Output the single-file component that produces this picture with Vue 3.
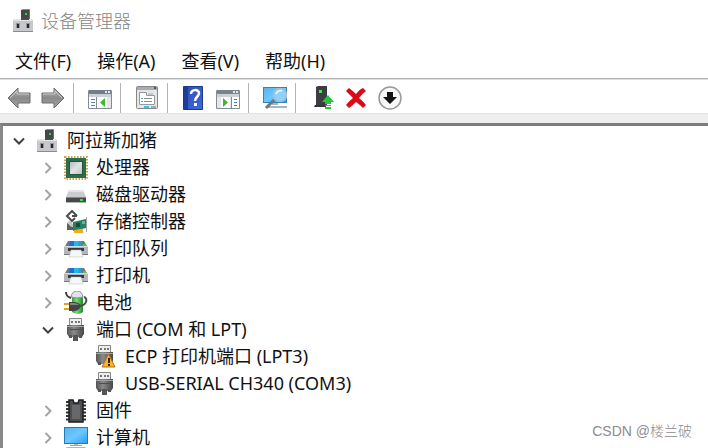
<template>
  <div class="device-manager">
    <svg class="icon-defs" width="0" height="0" aria-hidden="true">
      <defs>
        <linearGradient id="g-arrow" x1="0" y1="0" x2="0" y2="1">
          <stop offset="0" stop-color="#b5b5b5" />
          <stop offset="0.5" stop-color="#8a8a8a" />
          <stop offset="1" stop-color="#a2a2a2" />
        </linearGradient>
        <linearGradient id="g-screen" x1="0" y1="0" x2="1" y2="1">
          <stop offset="0" stop-color="#58b4ee" />
          <stop offset="0.5" stop-color="#6cc8ff" />
          <stop offset="1" stop-color="#2ba0f6" />
        </linearGradient>
        <linearGradient id="g-chip" x1="0" y1="0" x2="1" y2="1">
          <stop offset="0" stop-color="#b4b6b6" />
          <stop offset="0.5" stop-color="#e2e3e3" />
          <stop offset="1" stop-color="#bcbebe" />
        </linearGradient>
        <linearGradient id="g-plug" x1="0" y1="0" x2="1" y2="0">
          <stop offset="0" stop-color="#555" />
          <stop offset="0.4" stop-color="#8a8a8a" />
          <stop offset="1" stop-color="#484848" />
        </linearGradient>
        <linearGradient id="g-help" x1="0" y1="0" x2="1" y2="1">
          <stop offset="0" stop-color="#2c50b4" />
          <stop offset="1" stop-color="#4468d4" />
        </linearGradient>
        <linearGradient id="g-green" x1="0" y1="0" x2="1" y2="0">
          <stop offset="0" stop-color="#2f9d38" />
          <stop offset="0.4" stop-color="#7bdc72" />
          <stop offset="1" stop-color="#25872f" />
        </linearGradient>
      </defs>

      <symbol id="computer" viewBox="0 0 24 24">
        <path d="M10 1h9v10h-9z" fill="#45474b" />
        <path d="M10 1l2-1h7l-1 1z" fill="#898b8f" />
        <path d="M18 1l1-1v11h-1z" fill="#6f7174" />
        <path d="M14 4h2v2h-2z" fill="#24e03c" />
        <path d="M3 10h18l1 2v11H2V12z" fill="#c7c8cc" />
        <path d="M3 10h18v2H3z" fill="#e5e5e8" />
        <path d="M10 9h8v2h-8z" fill="#4b4d50" />
        <path d="M2 22h20v1H2z" fill="#8b8b90" />
        <path d="M5 14h4v5H5zM15 14h4v5h-4z" fill="#94969b" />
        <path d="M6 15h2v4H6zM16 15h2v4h-2z" fill="#26282b" />
      </symbol>

      <symbol id="cpu" viewBox="0 0 24 24">
        <rect x="1" y="1" width="22" height="22" fill="none" stroke="#c9a44c" stroke-width="2" stroke-dasharray="1.5 1.5" />
        <rect x="2" y="2" width="20" height="20" fill="#2f6a4c" />
        <rect x="5.500" y="5.500" width="13" height="13" fill="url(#g-chip)" stroke="#1f5a3c" />
      </symbol>

      <symbol id="disk" viewBox="0 0 24 24">
        <path d="M5 7h14l3 7H2z" fill="#cbccd0" />
        <path d="M5 7h14l1 2H4z" fill="#e4e4e7" />
        <path d="M2 14h20v5H2z" fill="#47494d" />
        <path d="M2 14h20v1H2z" fill="#85878b" />
        <path d="M2 19h20v1H2z" fill="#b2b3b6" />
        <path d="M16 16h3v2h-3z" fill="#2ce83c" />
      </symbol>

      <symbol id="storage" viewBox="0 0 24 24">
        <path d="M3 13l6 4 2 3H3z" fill="#5c5e60" />
        <path d="M3 12l3-1 4 4-3 2z" fill="#c3c5c7" />
        <path d="M13 6L8 1 3 6l5 5 3-3M13 6H8" fill="none" stroke="#4a4c4e" stroke-width="2" />
        <path d="M9 12l13-3v9l-13 3z" fill="#278061" />
        <path d="M12 13h4v4h-4z" fill="#174d38" />
        <path d="M18 11h3v3h-3z" fill="#5bb892" />
        <path d="M22 7h1v15h-1z" fill="#a3a6a8" />
        <path d="M10 20l9-1v4h-9z" fill="#f0ac20" />
      </symbol>

      <symbol id="printer" viewBox="0 0 24 24">
        <path d="M4 4h16l3 5H1z" fill="#74777b" />
        <path d="M6 4h5v5H5z" fill="#1773d5" />
        <path d="M10 4h5v5h-5z" fill="#27b6e7" />
        <path d="M15 4h2l1 5h-4z" fill="#2a9dd0" />
        <path d="M19 7h3v2h-3z" fill="#35d542" />
        <path d="M0 9h24v9H0z" fill="#b5b7bb" />
        <path d="M0 9h24v1H0z" fill="#d9dadd" />
        <path d="M4 11h16v3H4z" fill="#34373b" />
        <path d="M0 17h6v1H0zM18 17h6v1h-6z" fill="#75777b" />
        <path d="M7 13h10l2 7H5z" fill="#f6f7f8" stroke="#b6b8bb" stroke-width="0.500" />
      </symbol>

      <symbol id="battery" viewBox="0 0 24 24">
        <path d="M8 5h11v16q-5 4-11 0z" fill="url(#g-green)" />
        <path d="M7 6q1-6 6-6t6 6q-6 2-12 0z" fill="#dfe1ef" stroke="#8c90a0" />
        <path d="M2 1c0 4 2 5 5 6" fill="none" stroke="#3b3d3e" stroke-width="2" />
        <path d="M20 6c4 1 3 8-4 9" fill="none" stroke="#4b4d4e" stroke-width="2" />
        <path d="M0 13h6M0 18h6" stroke="#dba424" stroke-width="2" />
        <path d="M5 11h5q5 0 7 4-2 5-7 5H5z" fill="#424446" />
        <path d="M6 12h4q3 0 5 2H6z" fill="#818486" />
      </symbol>

      <symbol id="port" viewBox="0 0 24 24">
        <path d="M5.500.500h12V9h-12z" fill="#eee" stroke="#888" />
        <path d="M7 3h2v2H7zM11 3h2v2h-2zM14 3h2v2h-2z" fill="#777" />
        <path d="M3 7h17v9l-2 3H5l-2-3z" fill="url(#g-plug)" />
        <path d="M3 8h17v1H3z" fill="#a5a5a5" />
        <path d="M6 11h11v1H6z" fill="#4e4e4e" />
        <path d="M5 17h3v3H5zM15 17h3v3h-3zM9 17h5v6H9z" fill="#555" />
      </symbol>

      <symbol id="port-warning" viewBox="0 0 24 24">
        <path d="M5.500.500h12V9h-12z" fill="#eee" stroke="#888" />
        <path d="M7 3h2v2H7zM11 3h2v2h-2zM14 3h2v2h-2z" fill="#777" />
        <path d="M3 7h17v9l-2 3H5l-2-3z" fill="url(#g-plug)" />
        <path d="M3 8h17v1H3z" fill="#a5a5a5" />
        <path d="M5 17h3v3H5z" fill="#555" />
        <path d="M15.500 9L22 22H9z" fill="#f4b42c" stroke="#b96f12" stroke-linejoin="round" />
        <path d="M15 13h2v5h-2zM15 19h2v2h-2z" fill="#3a2608" />
      </symbol>

      <symbol id="firmware" viewBox="0 0 24 24">
        <path d="M4 2v20M20 2v20" stroke="#333" stroke-width="4" stroke-dasharray="2 1.5" />
        <path d="M5 1h4l1 3h4l1-3h4v22H5z" fill="#4c4e51" stroke="#1c1d1e" stroke-width="1.500" />
        <path d="M8 6h8v14H8z" fill="#66686b" />
      </symbol>

      <symbol id="monitor" viewBox="0 0 24 24">
        <path d="M0 1h24v17H0z" fill="#2a76b2" />
        <path d="M1 2h22v15H1z" fill="url(#g-screen)" />
        <path d="M10 18h4v1h-4z" fill="#aeb9c3" />
        <path d="M6 19h12v1H6z" fill="#94a5b4" />
        <path d="M3 21h18l3 2H0z" fill="#a7b8c7" />
      </symbol>

      <symbol id="back" viewBox="0 0 24 24">
        <path d="M1 12L11 2v5h12v10H11v5z" fill="url(#g-arrow)" stroke="#6d6d6d" stroke-linejoin="round" />
        <path d="M3 12l7-7v3h12" fill="none" stroke="#c9c9c9" />
      </symbol>

      <symbol id="forward" viewBox="0 0 24 24">
        <path d="M23 12L13 2v5H1v10h12v5z" fill="url(#g-arrow)" stroke="#6d6d6d" stroke-linejoin="round" />
        <path d="M2 8h12V5l7 7" fill="none" stroke="#c9c9c9" />
      </symbol>

      <symbol id="console-tree" viewBox="0 0 24 24">
        <path d="M.500 4.500h23v18H.500z" fill="#fff" stroke="#858b94" />
        <path d="M1 4h22v4H1z" fill="#747d8b" />
        <path d="M17 5h2v2h-2zM20 5h2v2h-2z" fill="#e3e8ef" />
        <path d="M1 8h22v3H1z" fill="#ccd1d7" />
        <path d="M8.500 11v12" stroke="#858b94" />
        <path d="M3 13.500h4M3 16.500h4M3 19.500h4" stroke="#4a86c5" />
        <path d="M17 12v9l-5-4.500z" fill="#38bd30" />
        <path d="M19 11h4v11h-4z" fill="#e4e6e9" />
      </symbol>

      <symbol id="properties" viewBox="0 0 24 24">
        <rect x="1.500" y=".500" width="21" height="22" rx="1" fill="#e5e6e8" stroke="#85878b" />
        <path d="M2 1h20v3H2z" fill="#a8abb0" />
        <path d="M19 1h2v2h-2z" fill="#505257" />
        <path d="M4.500 6.500h7v3h8v9h-15z" fill="#fff" stroke="#9699a2" />
        <path d="M13 7h5v2h-5z" fill="#c4c8ce" />
        <path d="M6 12h2v1H6zM6 15h2v1H6z" fill="#35bce7" />
        <path d="M9 12.500h8M9 15.500h8" stroke="#888d96" />
        <path d="M9 20h5v2H9z" fill="#2cc8ed" />
        <path d="M16 20h5v2h-5z" fill="#a4abb1" />
      </symbol>

      <symbol id="help" viewBox="0 0 24 24">
        <path d="M1.500.500h19v23h-19z" fill="url(#g-help)" stroke="#1c388c" />
        <path d="M2 1h4v22H2z" fill="#1e3d9a" />
        <path d="M9 8c0-5 8-5 8-1 0 4-4 4-4 8" fill="none" stroke="#fff" stroke-width="2.500" />
        <path d="M12 17h3v3h-3z" fill="#fff" />
      </symbol>

      <symbol id="action-pane" viewBox="0 0 24 24">
        <path d="M.500 4.500h23v18H.500z" fill="#e4e6e9" stroke="#858b94" />
        <path d="M1 4h22v4H1z" fill="#7c838e" />
        <path d="M17 5h2v2h-2zM20 5h2v2h-2z" fill="#e3e8ef" />
        <path d="M1 8h22v3H1z" fill="#ccd1d7" />
        <path d="M5 11h9v11H5z" fill="#fff" />
        <path d="M15.500 11v12" stroke="#858b94" />
        <path d="M16 11h7v11h-7z" fill="#fff" />
        <path d="M18 13.500h3M18 16.500h3M18 19.500h3" stroke="#3976cc" />
        <path d="M7 12v9l5-4.500z" fill="#45b332" />
      </symbol>

      <symbol id="scan" viewBox="0 0 24 24">
        <path d="M0 1h24v16H0z" fill="#3781b5" />
        <path d="M1 2h22v14H1z" fill="url(#g-screen)" />
        <path d="M9 17h6v2H9zM5 20h19v2H3z" fill="#a4b5c3" />
        <path d="M11 14l-8 8" stroke="#6c7780" stroke-width="3" />
        <circle cx="17" cy="9" r="6.500" fill="#8dd2fa" stroke="#b0bdc8" stroke-width="1.500" />
        <path d="M13 8c1-3 4-4 6-3" fill="none" stroke="#e1f5ff" stroke-width="1.500" />
      </symbol>

      <symbol id="update-driver" viewBox="0 0 24 24">
        <path d="M6 1l2-1h9v19H6z" fill="#3b3e42" />
        <path d="M5 19h11v2H4z" fill="#34373a" />
        <path d="M9 4h3v3H9z" fill="#36ee45" />
        <path d="M18 9l6 7h-3v2h-6v-2h-3z" fill="#25c63a" />
        <path d="M15 19h6v1h-6zM15 21h6v2h-6z" fill="#25c63a" />
      </symbol>

      <symbol id="uninstall" viewBox="0 0 24 24">
        <path d="M2 5l3-3q4 3 7 6 4-5 7-6l3 3q-4 3-7 7 4 3 7 7l-3 3q-4-4-7-6-4 4-7 6l-3-3q3-4 7-7-4-4-7-7z" fill="#de0916" />
      </symbol>

      <symbol id="disable" viewBox="0 0 24 24">
        <circle cx="12" cy="12" r="11" fill="#f8f8f8" stroke="#97999c" stroke-width="1.500" />
        <path d="M9 6h6v5h4l-7 7-7-7h4z" fill="#151515" />
      </symbol>
    </svg>

    <header class="title-bar">
      <svg class="icon"><use href="#computer" /></svg>
      <h1 class="title">设备管理器</h1>
    </header>

    <nav class="menu-bar">
      <button v-for="item in menus" :key="item" class="menu-item" type="button">{{ item }}</button>
    </nav>

    <div class="toolbar" role="toolbar">
      <div v-for="(group, index) in toolGroups" :key="index" class="tool-group">
        <button
          v-for="tool in group"
          :key="tool.icon"
          class="tool-btn"
          type="button"
          :aria-label="tool.label"
        >
          <svg class="icon"><use :href="'#' + tool.icon" /></svg>
        </button>
      </div>
    </div>

    <main class="tree-panel">
      <ul class="tree" role="tree">
        <li
          v-for="node in visibleNodes"
          :key="node.id"
          class="tree-row"
          :class="'level-' + node.level"
          role="treeitem"
        >
          <button
            v-if="node.children"
            class="toggle"
            :class="{ open: node.open }"
            type="button"
            :aria-label="node.name"
            :aria-expanded="node.open"
            @click="toggleNode(node.id)"
          >
            <svg class="chevron" viewBox="0 0 12 12">
              <path :d="node.open ? 'M1 3.500L6 8.500 11 3.500' : 'M3.500 1L8.500 6 3.500 11'" />
            </svg>
          </button>
          <span v-else class="toggle"></span>
          <svg class="icon"><use :href="'#' + node.icon" /></svg>
          <span class="node-name">{{ node.name }}</span>
        </li>
      </ul>
    </main>

    <div class="watermark">CSDN @楼兰破</div>
  </div>
</template>

<script setup>
import { ref, computed } from 'vue'

const menus = ['文件(F)', '操作(A)', '查看(V)', '帮助(H)']

const toolGroups = [
  [
    { icon: 'back', label: '后退' },
    { icon: 'forward', label: '前进' }
  ],
  [{ icon: 'console-tree', label: '显示/隐藏控制台树' }],
  [{ icon: 'properties', label: '属性' }],
  [
    { icon: 'help', label: '帮助' },
    { icon: 'action-pane', label: '显示/隐藏操作窗格' }
  ],
  [{ icon: 'scan', label: '扫描检测硬件改动' }],
  [
    { icon: 'update-driver', label: '更新驱动程序' },
    { icon: 'uninstall', label: '卸载设备' },
    { icon: 'disable', label: '禁用设备' }
  ]
]

const nodes = ref([
  { id: 1, level: 0, icon: 'computer', name: '阿拉斯加猪', children: true, open: true },
  { id: 2, parent: 1, level: 1, icon: 'cpu', name: '处理器', children: true, open: false },
  { id: 3, parent: 1, level: 1, icon: 'disk', name: '磁盘驱动器', children: true, open: false },
  { id: 4, parent: 1, level: 1, icon: 'storage', name: '存储控制器', children: true, open: false },
  { id: 5, parent: 1, level: 1, icon: 'printer', name: '打印队列', children: true, open: false },
  { id: 6, parent: 1, level: 1, icon: 'printer', name: '打印机', children: true, open: false },
  { id: 7, parent: 1, level: 1, icon: 'battery', name: '电池', children: true, open: false },
  { id: 8, parent: 1, level: 1, icon: 'port', name: '端口 (COM 和 LPT)', children: true, open: true },
  { id: 9, parent: 8, level: 2, icon: 'port-warning', name: 'ECP 打印机端口 (LPT3)' },
  { id: 10, parent: 8, level: 2, icon: 'port', name: 'USB-SERIAL CH340 (COM3)' },
  { id: 11, parent: 1, level: 1, icon: 'firmware', name: '固件', children: true, open: false },
  { id: 12, parent: 1, level: 1, icon: 'monitor', name: '计算机', children: true, open: false }
])

// 所有上级都展开时才显示
const visibleNodes = computed(() => nodes.value.filter(isVisible))

function findNode(id) {
  return nodes.value.find((n) => n.id === id)
}

function isVisible(node) {
  if (!node.parent) return true
  const parent = findNode(node.parent)
  return parent.open && isVisible(parent)
}

function toggleNode(id) {
  const node = findNode(id)
  node.open = !node.open
}
</script>

<style>
body {
  margin: 0;
  background: #fff;
}
</style>

<style scoped>
.device-manager {
  position: relative;
  display: flex;
  flex-direction: column;
  height: 100vh;
  overflow: hidden;
  background: #fff;
  color: #111;
  font-family: "Noto Sans", "Noto Sans CJK SC", sans-serif;
  font-size: 18px;
  line-height: 27px;
}

.icon-defs {
  position: absolute;
}

button {
  padding: 0;
  border: none;
  background: transparent;
  color: inherit;
  font: inherit;
}

.icon {
  display: block;
  flex: none;
  width: 24px;
  height: 24px;
}

.title-bar {
  display: flex;
  flex: none;
  align-items: center;
  gap: 6px;
  height: 42px;
  padding: 0 11px 2px;
}

.title {
  margin: 0;
  font-size: 18px;
  font-weight: 300;
  color: #858585;
}

.menu-bar {
  display: flex;
  flex: none;
  align-items: center;
  gap: 26px;
  height: 34px;
  padding: 0 15px;
  border-bottom: 1px solid #b2b5b8;
}

.toolbar {
  display: flex;
  flex: none;
  align-items: center;
  padding: 3px 7px 0;
  border-top: 1px solid #dbe0e5;
  border-bottom: 1px solid #e3e3e3;
}

.tool-group {
  display: flex;
  align-items: center;
  gap: 10px;
  height: 30px;
  margin-right: 14px;
  padding-right: 8px;
  border-right: 1px solid #b4b4b4;
}

.tool-group:last-child {
  border-right: none;
}

.tree-panel {
  flex: 1;
  min-height: 0;
  padding-top: 9px;
  background: #eee;
}

.tree {
  height: 100%;
  margin: 0;
  padding: 1px 0 0 2px;
  border-top: 3px solid #7d7d7d;
  border-left: 3px solid #898989;
  background: #fff;
  list-style: none;
}

.tree-row {
  display: flex;
  align-items: center;
  height: 27px;
  white-space: nowrap;
}

.level-1 {
  padding-left: 29px;
}

.level-2 {
  padding-left: 58px;
}

.toggle {
  display: flex;
  flex: none;
  align-items: center;
  justify-content: center;
  width: 28px;
  height: 27px;
  margin-right: 2px;
}

.chevron {
  width: 12px;
  height: 12px;
  fill: none;
  stroke: #a3a3a3;
  stroke-width: 2;
}

.open .chevron {
  stroke: #404040;
}

.node-name {
  margin-left: 8px;
}

.watermark {
  position: absolute;
  right: 16px;
  bottom: 6px;
  color: #8c8c8c;
  font-family: "Liberation Sans", "Noto Sans CJK SC", sans-serif;
  font-size: 14px;
  font-weight: 300;
  line-height: 22px;
}
</style>
